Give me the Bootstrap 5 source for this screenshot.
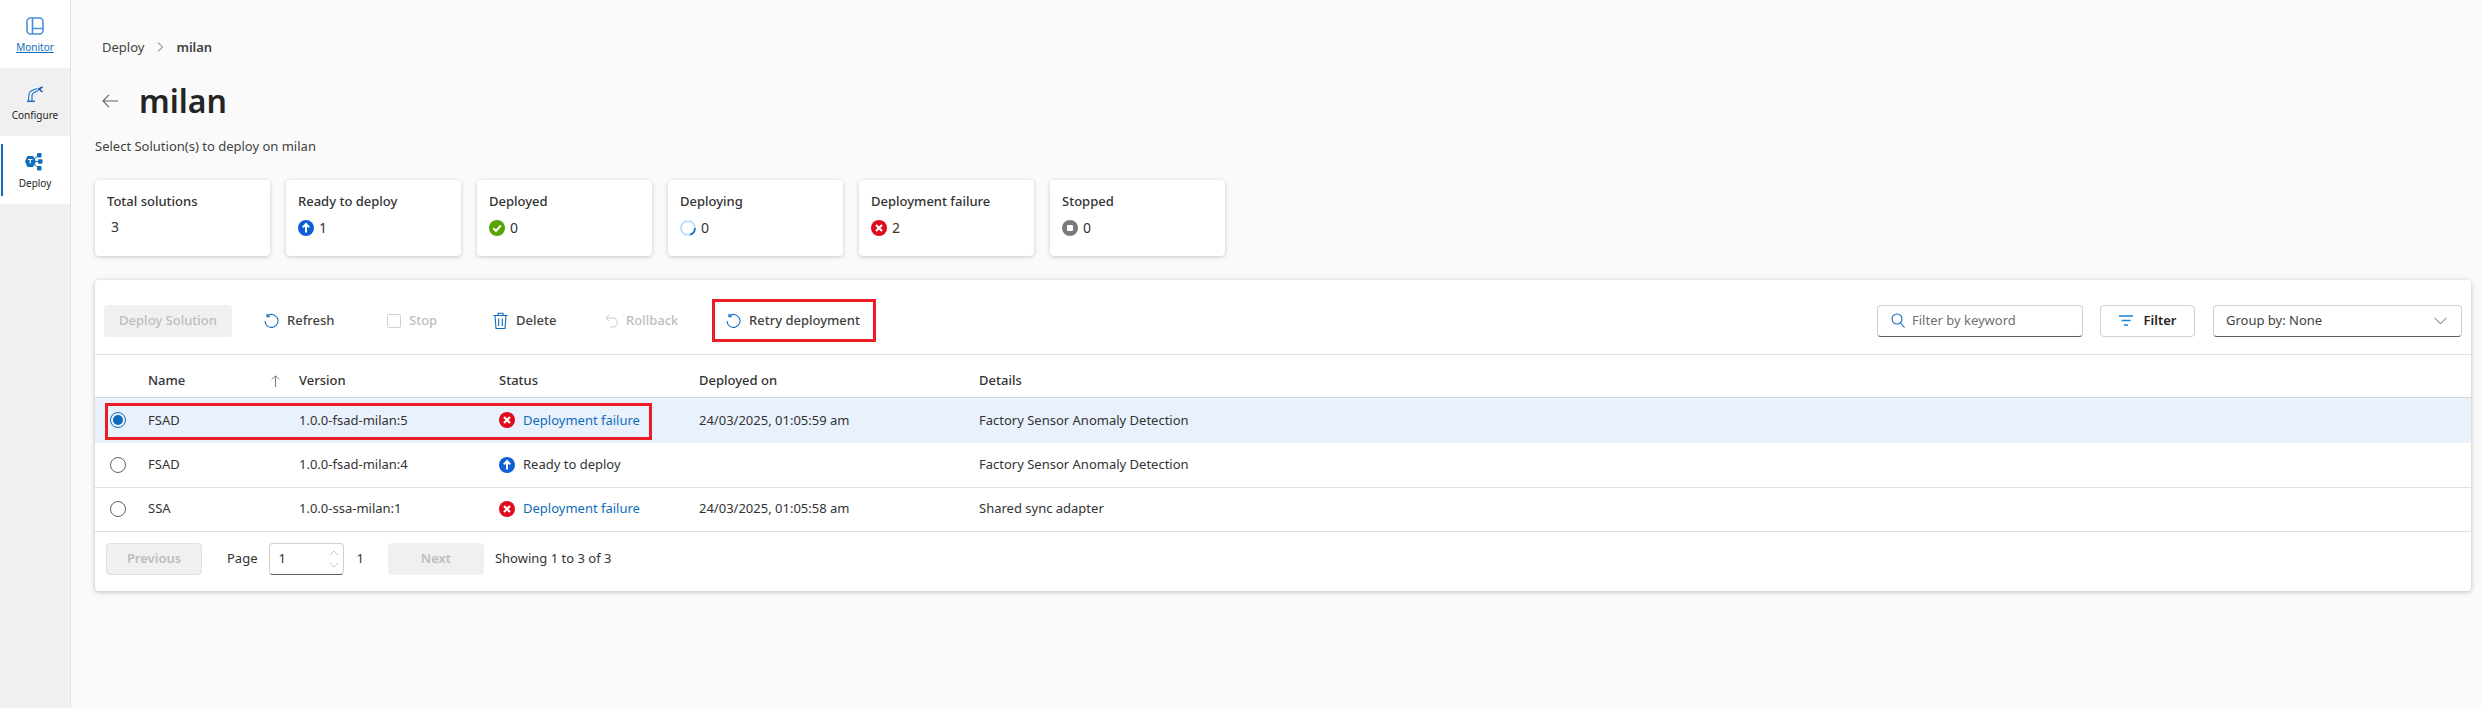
<!DOCTYPE html>
<html lang="en">
<head>
  <meta charset="UTF-8">
  <title>Deploy - milan</title>
  <link href="https://cdn.jsdelivr.net/npm/bootstrap@5.3.3/dist/css/bootstrap.min.css" rel="stylesheet">
  <style>
    body { background: #fafafa; color: #242424; font-family: "Noto Sans", "Open Sans", sans-serif; font-size: 13px; height: 708px; overflow: hidden; }
    .side-rail { width: 71px; flex: none; background: #f0f0f0; border-right: 1px solid #e0e0e0; height: 708px; }
    .rail-item { height: 68px; font-size: 10px; color: #242424; position: relative; padding-top: 17px; }
    .rail-item svg { display: block; margin-bottom: 5px; }
    .rail-on { background: #fff; }
    .rail-link { color: #0f6cbd; text-decoration: underline; }
    .rail-bar { position: absolute; left: 1px; top: 8px; bottom: 8px; width: 2px; background: #0f6cbd; }
    .page-area { padding: 37px 10px 0 24px; }
    .crumbs { padding-left: 7px; height: 20px; color: #424242; line-height: 20px; }
    .crumbs svg { margin: 0 12px 0 13px; }
    .page-title { font-size: 32px; font-weight: 600; line-height: 42px; margin: 0; color: #242424; }
    .title-row { margin-top: 23px; padding-left: 7px; gap: 21px; }
    .page-note { margin-top: 14px; line-height: 20px; color: #424242; }
    .stat-row { margin-top: 24px; gap: 16px; }
    .stat-tile { width: 175px; height: 76px; padding: 11px 12px; background: #fff; border-radius: 4px; box-shadow: 0 1px 4px rgba(0,0,0,.2); }
    .stat-name { font-weight: 500; line-height: 20px; color: #333; }
    .stat-val { margin-top: 7px; font-size: 14px; line-height: 20px; gap: 5px; color: #333; }
    .stat-plain { padding-left: 4px; margin-top: 6px; }
    .main-panel { margin-top: 24px; height: 311px; background: #fff; border-radius: 4px; box-shadow: 0 1px 5px rgba(0,0,0,.25); }
    .tool-row { height: 75px; padding: 7px 9px 0 9px; border-bottom: 1px solid #e0e0e0; }
    .tool-btn { height: 32px; background: none; border: 0; padding: 0; gap: 8px; font-weight: 500; color: #424242; }
    .tool-off { color: #bdbdbd; }
    .deploy-off { width: 128px; background: #f0f0f0; border-radius: 4px; margin-right: 32px; color: #bdbdbd; font-weight: 500; height: 32px; }
    .w-refresh { width: 123px; }
    .w-stop { width: 106px; }
    .w-delete { width: 112px; }
    .w-rollback { width: 107px; }
    .retry-box { width: 164px; height: 43px; padding-left: 11px; border: 3px solid #ed1c24; }
    .keyword-box { width: 206px; height: 32px; border: 1px solid #d1d1d1; border-bottom-color: #616161; border-radius: 4px; padding-left: 13px; gap: 7px; color: #707070; }
    .filter-btn { width: 95px; height: 32px; margin-left: 17px; border: 1px solid #d1d1d1; border-radius: 4px; gap: 11px; font-weight: 600; color: #242424; }
    .group-box { width: 249px; height: 32px; margin-left: 18px; border: 1px solid #d1d1d1; border-bottom-color: #616161; border-radius: 4px; padding: 0 14px 0 12px; color: #424242; }
    .sol-table { table-layout: fixed; margin: 0; width: 100%; }
    .sol-table th, .sol-table td { padding: 0; vertical-align: middle; background: transparent; box-shadow: none; color: #333; font-weight: 400; }
    .sol-table th { height: 42px; padding-top: 10px; font-weight: 500; border-bottom: 1px solid #d6d6d6; }
    .sol-table td { height: 44px; border-bottom: 1px solid #e0e0e0; }
    .sol-table .row-picked td { height: 46px; background: #e9f2fc; border-bottom: 0; }
    .col-radio { width: 53px; }
    .col-name { width: 151px; }
    .col-ver { width: 200px; }
    .col-status { width: 200px; }
    .col-date { width: 280px; }
    .radio-dot { display: block; width: 16px; height: 16px; margin-left: 15px; border: 1px solid #616161; border-radius: 50%; }
    .radio-on { border-color: #0f6cbd; padding: 2px; background: #0f6cbd content-box; }
    .name-head { padding-right: 19px !important; }
    .status-cell { gap: 8px; }
    .fail-link { color: #0f6cbd; text-decoration: none; }
    .row-outline { position: absolute; left: 10px; top: 5px; width: 547px; height: 37px; border: 3px solid #ed1c24; pointer-events: none; }
    .page-row { height: 32px; margin: 11px 0 0 11px; color: #333; }
    .pager-off { width: 96px; height: 32px; background: #f0f0f0; border: 1px solid #e0e0e0; border-radius: 4px; color: #bdbdbd; font-weight: 600; }
    .next-off { border-color: #f0f0f0; margin: 0 11px 0 24px; }
    .page-label { margin: 0 11px 0 25px; }
    .page-spin { width: 75px; height: 32px; border: 1px solid #d1d1d1; border-bottom-color: #616161; border-radius: 4px; padding: 0 4px 0 9px; margin-right: 13px; }
  </style>
</head>
<body>
<div class="d-flex">
  <nav class="side-rail">
    <div class="rail-item rail-on d-flex flex-column align-items-center">
      <svg width="18" height="18" viewBox="0 0 18 18" fill="none" stroke="#4a90d9" stroke-width="1.6"><rect x="1" y="1" width="16" height="16" rx="3.5"/><path d="M6.500 1v16M6.500 11.500h10.500"/></svg>
      <span class="rail-link">Monitor</span>
    </div>
    <div class="rail-item d-flex flex-column align-items-center">
      <svg width="18" height="18" viewBox="0 0 18 18" fill="none" stroke="#1a6fc4" stroke-width="1.1"><path d="M2.500 16 3 9Q3.500 6.500 6 5.500L11 3.500"/><path d="M6 16V10.500Q6 8.500 8 7.500L12.500 5.500"/><path d="M1 16.300h8" stroke-width="1.500"/><path d="M12 4.500 16.500 2M13 4 16.500 7" stroke="#0f5aa8" stroke-width="1.500"/></svg>
      <span>Configure</span>
    </div>
    <div class="rail-item rail-on d-flex flex-column align-items-center">
      <span class="rail-bar"></span>
      <svg width="20" height="18" viewBox="0 0 20 18"><path d="M2.500 3h5.500l3 5.500-3 5.500H2.500L0 8.500Z" fill="#0f6cbd"/><g fill="#0f6cbd"><rect x="12" y="0" width="4.500" height="4.500" rx="1"/><rect x="13" y="6.300" width="4.500" height="4.500" rx="1"/><rect x="12" y="13" width="4.500" height="4.500" rx="1"/></g><path d="M9 6 13 3M10 8.500h4M9 11l4 3.500" stroke="#0f6cbd" fill="none"/><path d="M3 6.500h4.500M5.200 6.500v4" stroke="#fff" stroke-width="1.200" fill="none"/></svg>
      <span>Deploy</span>
    </div>
  </nav>

  <main class="page-area flex-grow-1">
    <div class="crumbs d-flex align-items-center">
      <span>Deploy</span>
      <svg width="7" height="10" viewBox="0 0 7 10" fill="none" stroke="#616161"><path d="M1 .5 5.500 5 1 9.500"/></svg>
      <span class="fw-semibold">milan</span>
    </div>

    <div class="title-row d-flex align-items-center">
      <svg width="16" height="14" viewBox="0 0 16 14" fill="none" stroke="#616161" stroke-width="1.1"><path d="M7 .8 1 7l6 6.200M1 7h15"/></svg>
      <h1 class="page-title">milan</h1>
    </div>
    <div class="page-note">Select Solution(s) to deploy on milan</div>

    <div class="stat-row d-flex">
      <div class="stat-tile">
        <div class="stat-name">Total solutions</div>
        <div class="stat-val stat-plain">3</div>
      </div>
      <div class="stat-tile">
        <div class="stat-name">Ready to deploy</div>
        <div class="stat-val d-flex align-items-center">
          <svg width="16" height="16" viewBox="0 0 16 16"><circle cx="8" cy="8" r="8" fill="#0f5fd7"/><path d="M8 12.500V4M4.800 7.400 8 4l3.200 3.400" fill="none" stroke="#fff" stroke-width="2"/></svg>1
        </div>
      </div>
      <div class="stat-tile">
        <div class="stat-name">Deployed</div>
        <div class="stat-val d-flex align-items-center">
          <svg width="16" height="16" viewBox="0 0 16 16"><circle cx="8" cy="8" r="8" fill="#57a300"/><path d="M4.300 8.300 7 11l4.800-5.500" fill="none" stroke="#fff" stroke-width="2"/></svg>0
        </div>
      </div>
      <div class="stat-tile">
        <div class="stat-name">Deploying</div>
        <div class="stat-val d-flex align-items-center">
          <svg width="16" height="16" viewBox="0 0 16 16" fill="none" stroke-width="1.600"><circle cx="8" cy="8" r="7" stroke="#b5d5f5"/><path d="M15 8a7 7 0 0 1-5 6.700" stroke="#0f6cbd"/></svg>0
        </div>
      </div>
      <div class="stat-tile">
        <div class="stat-name">Deployment failure</div>
        <div class="stat-val d-flex align-items-center">
          <svg width="16" height="16" viewBox="0 0 16 16"><circle cx="8" cy="8" r="8" fill="#e00b1c"/><path d="M5 5l6 6M11 5l-6 6" stroke="#fff" stroke-width="2.200"/></svg>2
        </div>
      </div>
      <div class="stat-tile">
        <div class="stat-name">Stopped</div>
        <div class="stat-val d-flex align-items-center">
          <svg width="16" height="16" viewBox="0 0 16 16"><circle cx="8" cy="8" r="8" fill="#7a7a7a"/><rect x="5" y="5" width="6" height="6" rx="1" fill="#fff"/></svg>0
        </div>
      </div>
    </div>

    <section class="main-panel">
      <div class="tool-row d-flex align-items-center">
        <button type="button" class="deploy-off border-0" disabled>Deploy Solution</button>
        <button type="button" class="tool-btn w-refresh d-flex align-items-center">
          <svg width="15" height="16" viewBox="0 0 15 16" fill="none" stroke="#0f6cbd" stroke-width="1.100"><path d="M3 3.200A6.500 6.500 0 1 1 1 8M3 .8v3h3"/></svg>Refresh
        </button>
        <button type="button" class="tool-btn tool-off w-stop d-flex align-items-center" disabled>
          <svg width="14" height="14" viewBox="0 0 14 14" fill="none" stroke="#d1d1d1"><rect x=".5" y=".5" width="13" height="13" rx="1"/></svg>Stop
        </button>
        <button type="button" class="tool-btn w-delete d-flex align-items-center">
          <svg width="15" height="18" viewBox="0 0 15 18" fill="none" stroke="#0f6cbd" stroke-width="1.100"><path d="M.5 3.500h14M5 3.500V1.200h5v2.300M2 3.500l1 13h9l1-13M5.700 6.500v7.500M9.300 6.500v7.500"/></svg>Delete
        </button>
        <button type="button" class="tool-btn tool-off w-rollback d-flex align-items-center" disabled>
          <svg width="13" height="14" viewBox="0 0 13 14" fill="none" stroke="#c8c8c8"><path d="M4 1 1 4l3 3M1 4h7a4.500 4.500 0 0 1 0 9H5"/></svg>Rollback
        </button>
        <button type="button" class="tool-btn retry-box d-flex align-items-center">
          <svg width="15" height="16" viewBox="0 0 15 16" fill="none" stroke="#0f6cbd" stroke-width="1.100"><path d="M3 3.200A6.500 6.500 0 1 1 1 8M3 .8v3h3"/></svg>Retry deployment
        </button>
        <div class="ms-auto d-flex align-items-center">
          <div class="keyword-box d-flex align-items-center">
            <svg width="14" height="15" viewBox="0 0 14 15" fill="none" stroke="#0f6cbd" stroke-width="1.100"><circle cx="6" cy="6" r="5"/><path d="M9.500 10l4 4.500"/></svg>
            <span>Filter by keyword</span>
          </div>
          <div class="filter-btn d-flex align-items-center justify-content-center">
            <svg width="14" height="11" viewBox="0 0 14 11" fill="none" stroke="#1683d8" stroke-width="1.500"><path d="M0 1h14M2.500 5.500h9M5 10h4"/></svg>
            <span>Filter</span>
          </div>
          <div class="group-box d-flex align-items-center justify-content-between">
            <span>Group by: None</span>
            <svg width="13" height="8" viewBox="0 0 13 8" fill="none" stroke="#616161"><path d="M.5 .8 6.500 6.800 12.500 .8"/></svg>
          </div>
        </div>
      </div>

      <table class="table sol-table">
        <colgroup>
          <col class="col-radio"><col class="col-name"><col class="col-ver"><col class="col-status"><col class="col-date"><col>
        </colgroup>
        <thead>
          <tr>
            <th></th>
            <th class="name-head">
              <div class="d-flex align-items-center justify-content-between">
                <span>Name</span>
                <svg width="9" height="12" viewBox="0 0 9 12" fill="none" stroke="#7a7a7a"><path d="M.8 4.500 4.500 .8 8.200 4.500M4.500 1v11"/></svg>
              </div>
            </th>
            <th>Version</th>
            <th>Status</th>
            <th>Deployed on</th>
            <th>Details</th>
          </tr>
        </thead>
        <tbody>
          <tr class="row-picked">
            <td class="position-relative"><span class="radio-dot radio-on"></span><span class="row-outline"></span></td>
            <td>FSAD</td>
            <td>1.0.0-fsad-milan:5</td>
            <td><div class="status-cell d-flex align-items-center">
              <svg width="16" height="16" viewBox="0 0 16 16"><circle cx="8" cy="8" r="8" fill="#e00b1c"/><path d="M5 5l6 6M11 5l-6 6" stroke="#fff" stroke-width="2.200"/></svg>
              <a href="#" class="fail-link">Deployment failure</a></div></td>
            <td>24/03/2025, 01:05:59 am</td>
            <td>Factory Sensor Anomaly Detection</td>
          </tr>
          <tr>
            <td><span class="radio-dot"></span></td>
            <td>FSAD</td>
            <td>1.0.0-fsad-milan:4</td>
            <td><div class="status-cell d-flex align-items-center">
              <svg width="16" height="16" viewBox="0 0 16 16"><circle cx="8" cy="8" r="8" fill="#0f5fd7"/><path d="M8 12.500V4M4.800 7.400 8 4l3.200 3.400" fill="none" stroke="#fff" stroke-width="2"/></svg>
              <span>Ready to deploy</span></div></td>
            <td></td>
            <td>Factory Sensor Anomaly Detection</td>
          </tr>
          <tr>
            <td><span class="radio-dot"></span></td>
            <td>SSA</td>
            <td>1.0.0-ssa-milan:1</td>
            <td><div class="status-cell d-flex align-items-center">
              <svg width="16" height="16" viewBox="0 0 16 16"><circle cx="8" cy="8" r="8" fill="#e00b1c"/><path d="M5 5l6 6M11 5l-6 6" stroke="#fff" stroke-width="2.200"/></svg>
              <a href="#" class="fail-link">Deployment failure</a></div></td>
            <td>24/03/2025, 01:05:58 am</td>
            <td>Shared sync adapter</td>
          </tr>
        </tbody>
      </table>

      <div class="page-row d-flex align-items-center">
        <div class="pager-off d-flex align-items-center justify-content-center">Previous</div>
        <div class="page-label">Page</div>
        <div class="page-spin d-flex align-items-center justify-content-between">
          <span>1</span>
          <svg width="10" height="20" viewBox="0 0 10 20" fill="none" stroke="#c8c8c8"><path d="M1 6l4-4 4 4M1 14l4 4 4-4"/></svg>
        </div>
        <div>1</div>
        <div class="pager-off next-off d-flex align-items-center justify-content-center">Next</div>
        <div>Showing 1 to 3 of 3</div>
      </div>
    </section>
  </main>
</div>
<script src="https://cdn.jsdelivr.net/npm/bootstrap@5.3.3/dist/js/bootstrap.bundle.min.js"></script>
</body>
</html>
